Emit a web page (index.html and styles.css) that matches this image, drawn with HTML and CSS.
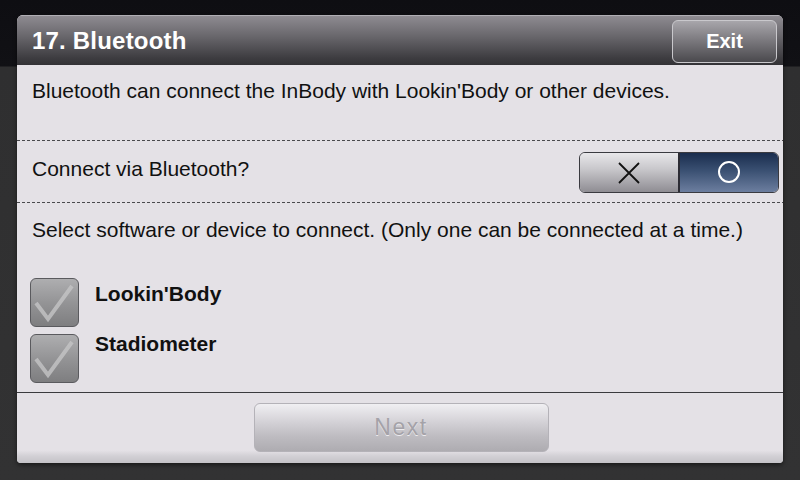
FILE: index.html
```html
<!DOCTYPE html>
<html>
<head>
<meta charset="utf-8">
<link rel="stylesheet" href="styles.css">
</head>
<body>
<div class="dialog">
  <div class="header">
    <div class="title">17. Bluetooth</div>
    <div class="exit">Exit</div>
  </div>
  <div class="row intro"><span>Bluetooth can connect the InBody with Lookin'Body or other devices.</span></div>
  <div class="dash"></div>
  <div class="row connect">
    <span>Connect via Bluetooth?</span>
    <div class="toggle">
      <div class="opt off">
        <svg width="22" height="22" viewBox="0 0 22 22"><path d="M1 1 L21 21 M21 1 L1 21" stroke="#111" stroke-width="1.8" fill="none"/></svg>
      </div>
      <div class="opt on">
        <svg width="24" height="24" viewBox="0 0 24 24"><circle cx="12" cy="12" r="10" stroke="#fff" stroke-width="2" fill="none"/></svg>
      </div>
    </div>
  </div>
  <div class="dash"></div>
  <div class="row select"><span>Select software or device to connect. (Only one can be connected at a time.)</span></div>
  <div class="checks">
    <div class="check">
      <div class="box"><svg width="48" height="48" viewBox="0 0 48 48"><polyline points="6,25 18,41 42,8" stroke="#c4c4c6" stroke-opacity="0.8" stroke-width="4" fill="none"/></svg></div>
      <span class="label">Lookin'Body</span>
    </div>
    <div class="check">
      <div class="box"><svg width="48" height="48" viewBox="0 0 48 48"><polyline points="6,25 18,41 42,8" stroke="#c4c4c6" stroke-opacity="0.8" stroke-width="4" fill="none"/></svg></div>
      <span class="label second">Stadiometer</span>
    </div>
  </div>
  <div class="footer">
    <div class="next">Next</div>
  </div>
</div>
</body>
</html>
```
FILE: styles.css
```css
html, body {
  margin: 0;
  padding: 0;
}
body {
  width: 800px;
  height: 480px;
  overflow: hidden;
  background: linear-gradient(to bottom, #0e0e12 0, #111115 66px, #2f2f30 67px, #323233 100%);
  font-family: "Liberation Sans", Arial, sans-serif;
  padding-top: 15px;
  box-sizing: border-box;
}
.dialog {
  margin-left: 17px;
  width: 766px;
  height: 448px;
  background: #e4e1e6;
  border-radius: 6px 6px 4px 4px;
  display: flex;
  flex-direction: column;
  overflow: hidden;
  box-shadow: 0 2px 4px rgba(0,0,0,0.5);
}
.header {
  height: 50px;
  flex: none;
  display: flex;
  align-items: center;
  justify-content: space-between;
  padding: 0 6px 0 15px;
  background: linear-gradient(to bottom, #8e8b91 0%, #6a686d 40%, #3e3d41 85%, #333236 100%);
  border-top: 1px solid #b0aeb4;
  box-sizing: border-box;
}
.title {
  color: #fff;
  font-size: 24px;
  font-weight: bold;
  padding-top: 1px;
  letter-spacing: 0.2px;
}
.exit {
  width: 105px;
  height: 43px;
  box-sizing: border-box;
  border: 1px solid #c9c8cc;
  border-radius: 6px;
  background: linear-gradient(to bottom, #a8a6ab 0%, #7d7b80 45%, #4a494d 100%);
  color: #fff;
  font-weight: bold;
  font-size: 20px;
  display: flex;
  align-items: center;
  justify-content: center;
  margin-top: 1px;
}
.row {
  padding-left: 15px;
  font-size: 21px;
  color: #111;
  display: flex;
  align-items: center;
  flex: none;
}
.intro {
  height: 75px;
  align-items: flex-start;
  padding-top: 14px;
  box-sizing: border-box;
}
.dash {
  height: 1px;
  flex: none;
  background: repeating-linear-gradient(to right, #4a4a4e 0 3px, transparent 3px 5px);
}
.connect {
  height: 61px;
  justify-content: space-between;
  padding-right: 4px;
}
.connect span {
  margin-top: -6px;
}
.toggle {
  width: 200px;
  height: 41px;
  box-sizing: border-box;
  border: 1px solid #3a3a40;
  border-radius: 6px;
  display: flex;
  overflow: hidden;
  margin-top: 1px;
}
.opt {
  flex: 1;
  display: flex;
  align-items: center;
  justify-content: center;
}
.off {
  background: linear-gradient(to bottom, #e8e7ea 0%, #c9c8cc 40%, #8f8d93 100%);
  border-right: 2px solid #2c2c34;
}
.off svg {
  margin-top: 1px;
}
.on {
  background: linear-gradient(to bottom, #1a2d4e 0%, #3a5072 45%, #6c7e9f 100%);
}
.select {
  height: 56px;
  align-items: flex-start;
  padding-top: 15px;
  box-sizing: border-box;
}
.checks {
  padding: 19px 0 9px 13px;
  display: flex;
  flex-direction: column;
  gap: 7px;
  border-bottom: 1px solid #3a3a3e;
  flex: none;
}
.check {
  display: flex;
  align-items: flex-start;
  gap: 16px;
}
.box {
  width: 49px;
  height: 49px;
  box-sizing: border-box;
  border: 1px solid #5a5a5e;
  border-radius: 6px;
  background: linear-gradient(to bottom, #aeaeb0 0%, #949496 50%, #7e7e80 100%);
  display: flex;
  overflow: hidden;
}
.box svg {
  margin: -1px 0 0 -1px;
}
.label {
  font-size: 21px;
  font-weight: bold;
  color: #111;
  margin-top: 4px;
}
.label.second {
  margin-top: -2px;
}
.footer {
  flex: 1;
  display: flex;
  justify-content: center;
  align-items: flex-start;
  padding-top: 10px;
  background: linear-gradient(to bottom, #e4e1e6 0%, #e4e1e6 82%, #d2d0d5 90%, #c4c2c7 100%);
}
.next {
  width: 295px;
  height: 49px;
  box-sizing: border-box;
  border: 1px solid #b4b2b8;
  border-radius: 6px;
  background: linear-gradient(to bottom, #f0eff2 0%, #d6d4d9 35%, #bdbbc0 70%, #aeacb1 100%);
  color: #a4a2a8;
  font-size: 23px;
  letter-spacing: 1.5px;
  display: flex;
  align-items: center;
  justify-content: center;
  text-shadow: 0 1px 0 #ecebee;
  margin-left: 2px;
}
```
